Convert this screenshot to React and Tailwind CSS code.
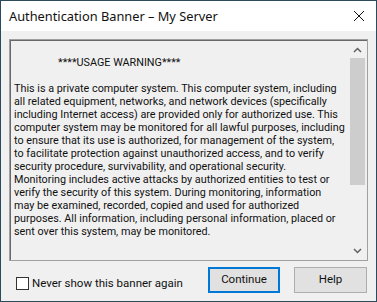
import React from 'react';

const lines = [
  'This is a private computer system. This computer system, including',
  'all related equipment, networks, and network devices (specifically',
  'including Internet access) are provided only for authorized use. This',
  'computer system may be monitored for all lawful purposes, including',
  'to ensure that its use is authorized, for management of the system,',
  'to facilitate protection against unauthorized access, and to verify',
  'security procedure, survivability, and operational security.',
  'Monitoring includes active attacks by authorized entities to test or',
  'verify the security of this system. During monitoring, information',
  'may be examined, recorded, copied and used for authorized',
  'purposes. All information, including personal information, placed or',
  'sent over this system, may be monitored.',
];

const App = () => {
  return (
    <div className="w-[377px] h-[302px] flex flex-col border border-[#2b4a5c] bg-[#f0f0f0] text-black overflow-hidden" style={{ fontFamily: 'Roboto, sans-serif' }}>
      {/* Title bar */}
      <div className="h-[30px] bg-white flex items-center justify-between pl-[8px] pr-[10px] shrink-0">
        <span className="text-[12.8px] leading-none text-[#111]" style={{ fontFamily: '"Noto Sans", sans-serif' }}>Authentication Banner – My Server</span>
        <svg width="12" height="12" viewBox="0 0 12 12" className="mr-[1px]">
          <path d="M1 1 L11 11 M11 1 L1 11" stroke="#111" strokeWidth="1" />
        </svg>
      </div>

      {/* Body */}
      <div className="h-[270px] shrink-0 flex flex-col px-[8px] pt-[8px]">
        <div className="h-[222px] shrink-0 flex border border-[#a0a0a0] shadow-[inset_1px_1px_0_#696969]">
          <div className="flex-1 pl-[4px] pt-[16px] text-[10.8px] leading-[13px] text-[#111]">
            <div className="pl-[44px]">****USAGE WARNING****</div>
            <div className="h-[13px]" />
            {lines.map((line, i) => (
              <div key={i} className="whitespace-nowrap">{line}</div>
            ))}
          </div>
          {/* Scrollbar */}
          <div className="w-[17px] flex flex-col items-center py-[1px] mr-[1px]">
            <div className="h-[17px] w-full flex items-center justify-center">
              <svg width="9" height="6" viewBox="0 0 9 6"><path d="M1 5 L4.5 1.5 L8 5" fill="none" stroke="#606060" strokeWidth="1.5" /></svg>
            </div>
            <div className="w-[15px] h-[127px] bg-[#cdcdcd]" />
            <div className="flex-1" />
            <div className="h-[17px] w-full flex items-center justify-center">
              <svg width="9" height="6" viewBox="0 0 9 6"><path d="M1 1 L4.5 4.5 L8 1" fill="none" stroke="#606060" strokeWidth="1.5" /></svg>
            </div>
          </div>
        </div>

        {/* Footer */}
        <div className="h-[26px] shrink-0 flex items-center mt-[6px]">
          <label className="flex items-center gap-[3px] pl-[7px] mt-[7px]">
            <span className="w-[13px] h-[13px] border border-[#333] bg-white" />
            <span className="text-[11.5px] text-[#111]">Never show this banner again</span>
          </label>
          <div className="flex-1" />
          <button className="w-[72px] h-[26px] border-2 border-[#0078d7] bg-[#e1e1e1] text-[11.5px] text-[#111]">Continue</button>
          <button className="w-[73px] h-[26px] ml-[14px] mr-[1px] border border-[#adadad] bg-[#e1e1e1] text-[11.5px] text-[#111]">Help</button>
        </div>
      </div>
    </div>
  );
};

export default App;
